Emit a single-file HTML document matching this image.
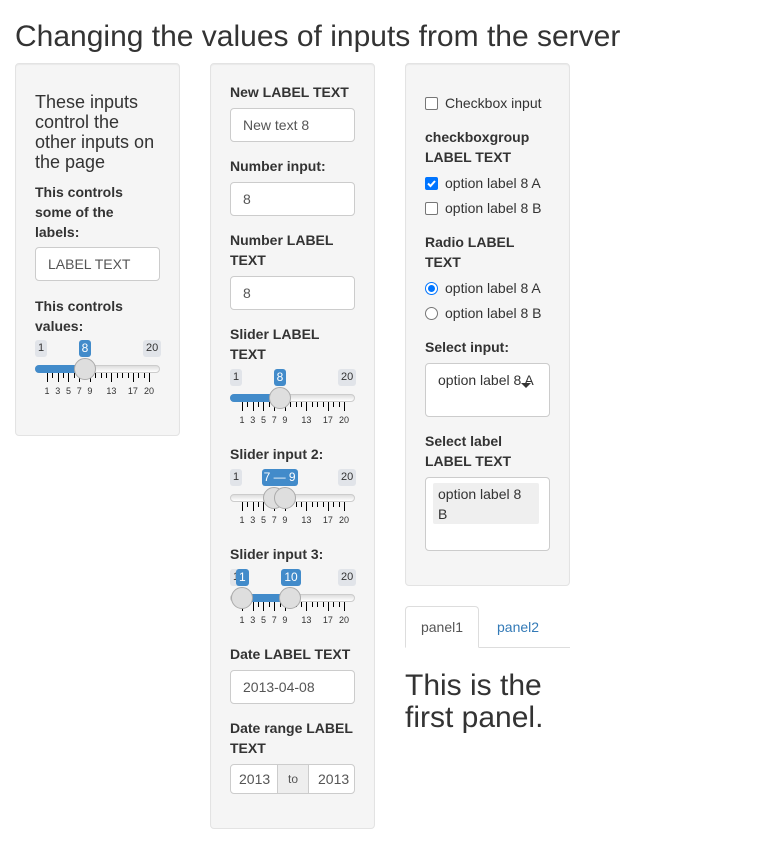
<!DOCTYPE html>
<html><head><meta charset="utf-8">
<style>
*{box-sizing:border-box}
body{margin:0;width:780px;height:849px;background:#fff;font-family:"Liberation Sans",sans-serif;color:#333;position:relative;overflow:hidden}
.a{position:absolute;white-space:nowrap}
.well{position:absolute;background:#f5f5f5;border:1px solid #e3e3e3;border-radius:4px;box-shadow:inset 0 1px 1px rgba(0,0,0,.05)}
.lb{position:absolute;font-weight:bold;font-size:14px;line-height:20px;white-space:nowrap}
.inp{position:absolute;background:#fff;border:1px solid #ccc;border-radius:4px;font-size:14px;color:#555;padding-left:12px;white-space:nowrap;overflow:hidden}
.tag{position:absolute;font-size:11px;line-height:17px;height:17px;padding:0 3px;border-radius:3px;background:#e1e4e9;color:#333;top:0}
.tag.b{background:#428bca;color:#fff;font-size:12px}
.track{position:absolute;height:8px;border:1px solid #ccc;border-radius:4px;background:linear-gradient(#ddd,#fff)}
.bar{position:absolute;height:8px;background:#428bca;border-radius:4px 0 0 4px}
.h{position:absolute;width:22px;height:22px;border-radius:50%;background:#dedede;border:1px solid #aaa}
.tk{position:absolute;width:1px;background:#000}
.gl{position:absolute;font-size:9px;line-height:10px;color:#333;transform:translateX(-50%)}
.cb{position:absolute;width:13px;height:13px;border:1px solid #767676;border-radius:2px;background:#fff}
.rd{position:absolute;width:13px;height:13px;border:1px solid #767676;border-radius:50%;background:#fff}
.t{position:absolute;font-size:14px;line-height:20px;white-space:nowrap}
</style></head><body>
<div class="a" style="left:15px;top:19px;font-size:30px;line-height:36px">Changing the values of inputs from the server</div>

<div class="well" style="left:15px;top:63px;width:165px;height:373px"></div>
<div class="well" style="left:210px;top:63px;width:165px;height:766px"></div>
<div class="well" style="left:405px;top:63px;width:165px;height:523px"></div>

<!-- panel 1 -->
<div class="a" style="left:35px;top:92px;font-size:18px;line-height:20px;white-space:normal;width:130px">These inputs control the other inputs on the page</div>
<div class="lb" style="left:35px;top:182px">This controls<br>some of the<br>labels:</div>
<div class="inp" style="left:35px;top:247px;width:125px;height:34px;line-height:32px">LABEL TEXT</div>
<div class="lb" style="left:35px;top:296px">This controls<br>values:</div>

<!-- panel 2 -->
<div class="lb" style="left:230px;top:82px">New LABEL TEXT</div>
<div class="inp" style="left:230px;top:108px;width:125px;height:34px;line-height:32px">New text 8</div>
<div class="lb" style="left:230px;top:156px">Number input:</div>
<div class="inp" style="left:230px;top:182px;width:125px;height:34px;line-height:32px">8</div>
<div class="lb" style="left:230px;top:230px">Number LABEL<br>TEXT</div>
<div class="inp" style="left:230px;top:276px;width:125px;height:34px;line-height:32px">8</div>
<div class="lb" style="left:230px;top:324px">Slider LABEL<br>TEXT</div>
<div class="lb" style="left:230px;top:444px">Slider input 2:</div>
<div class="lb" style="left:230px;top:544px">Slider input 3:</div>
<div class="lb" style="left:230px;top:644px">Date LABEL TEXT</div>
<div class="inp" style="left:230px;top:670px;width:125px;height:34px;line-height:32px">2013-04-08</div>
<div class="lb" style="left:230px;top:718px">Date range LABEL<br>TEXT</div>
<div class="inp" style="left:230px;top:764px;width:125px;height:30px;padding:0;font-size:14px;line-height:28px;color:#555">
<span style="position:absolute;left:8px;width:38px;overflow:hidden">2013</span>
<span style="position:absolute;left:46px;width:32px;top:0;bottom:0;background:#eee;border-left:1px solid #ccc;border-right:1px solid #ccc;text-align:center;font-size:12px">to</span>
<span style="position:absolute;left:87px;width:36px;overflow:hidden">2013</span></div>

<!-- panel 3 -->
<div class="cb" style="left:425px;top:97px"></div><div class="t" style="left:445px;top:93px">Checkbox input</div>
<div class="lb" style="left:425px;top:127px">checkboxgroup<br>LABEL TEXT</div>
<div class="cb" style="left:425px;top:177px;background:#0075ff;border-color:#0075ff"><svg width="11" height="11" viewBox="0 0 11 11" style="position:absolute;left:0;top:0"><path d="M2 5.5l2.5 2.5 4.5-5" stroke="#fff" stroke-width="2" fill="none"/></svg></div>
<div class="t" style="left:445px;top:173px">option label 8 A</div>
<div class="cb" style="left:425px;top:202px"></div><div class="t" style="left:445px;top:198px">option label 8 B</div>
<div class="lb" style="left:425px;top:232px">Radio LABEL<br>TEXT</div>
<div class="rd" style="left:425px;top:282px;border-color:#0075ff"><div style="position:absolute;left:2px;top:2px;width:7px;height:7px;border-radius:50%;background:#0075ff"></div></div>
<div class="t" style="left:445px;top:278px">option label 8 A</div>
<div class="rd" style="left:425px;top:307px"></div><div class="t" style="left:445px;top:303px">option label 8 B</div>
<div class="lb" style="left:425px;top:337px">Select input:</div>
<div class="inp" style="left:425px;top:363px;width:125px;height:54px;color:#333;padding-top:6px;line-height:20px">option label 8 A</div>
<div class="a" style="left:521px;top:383px;width:0;height:0;border-left:5px solid transparent;border-right:5px solid transparent;border-top:5px solid #333"></div>
<div class="lb" style="left:425px;top:431px">Select label<br>LABEL TEXT</div>
<div class="inp" style="left:425px;top:477px;width:125px;height:74px;padding:0"></div>
<div class="a" style="left:433px;top:483px;width:106px;height:41px;background:#efefef;border-radius:2px;font-size:14px;line-height:20px;padding:1px 5px;white-space:normal;color:#333">option label 8 B</div>

<!-- tabs -->
<div class="a" style="left:405px;top:647px;width:165px;height:1px;background:#ddd"></div>
<div class="a" style="left:405px;top:606px;width:74px;height:42px;border:1px solid #ddd;border-bottom-color:#fff;border-radius:4px 4px 0 0;background:#fff;font-size:14px;line-height:40px;text-align:center;color:#555">panel1</div>
<div class="a" style="left:497px;top:617px;font-size:14px;line-height:20px;color:#337ab7">panel2</div>
<div class="a" style="left:405px;top:670px;font-size:30px;line-height:32px">This is the<br>first panel.</div>

<script>
function slider(x,y,from,to,single){
  var W=125,gx=x+12,gw=102;
  function px(v){return gx+(v-1)/19*gw}
  var h='';
  h+='<div class="tag" style="left:'+x+'px;top:'+y+'px">1</div>';
  h+='<div class="tag" style="left:'+(x+W-17)+'px;top:'+y+'px">20</div>';
  h+='<div class="track" style="left:'+x+'px;top:'+(y+25)+'px;width:'+W+'px"></div>';
  if(single){
    h+='<div class="bar" style="left:'+x+'px;top:'+(y+25)+'px;width:'+(px(from)-x)+'px"></div>';
    h+='<div class="tag b" style="left:'+(px(from)-6)+'px;top:'+y+'px">'+from+'</div>';
  } else {
    h+='<div class="bar" style="left:'+px(from)+'px;top:'+(y+25)+'px;width:'+(px(to)-px(from))+'px;border-radius:0"></div>';
    if(to-from<4){
      h+='<div class="tag b" style="left:'+((px(from)+px(to))/2-18)+'px;top:'+y+'px;width:36px;padding:0;text-align:center">'+from+' — '+to+'</div>';
    } else {
      h+='<div class="tag b" style="left:'+(px(from)-6)+'px;top:'+y+'px">'+from+'</div>';
      h+='<div class="tag b" style="left:'+(px(to)-9)+'px;top:'+y+'px">'+to+'</div>';
    }
  }
  var labs=[1,3,5,7,9,13,17,20];
  for(var v=1;v<=20;v++){
    var major=labs.indexOf(v)>=0;
    h+='<div class="tk" style="left:'+Math.round(px(v))+'px;top:'+(y+33)+'px;height:'+(major?9:5)+'px"></div>';
    if(major)h+='<div class="gl" style="left:'+px(v)+'px;top:'+(y+46)+'px">'+v+'</div>';
  }
  h+='<div class="h" style="left:'+(px(from)-11)+'px;top:'+(y+18)+'px"></div>';
  if(!single)h+='<div class="h" style="left:'+(px(to)-11)+'px;top:'+(y+18)+'px"></div>';
  document.body.insertAdjacentHTML('beforeend',h);
}
slider(35,340,8,8,true);
slider(230,369,8,8,true);
slider(230,469,7,9,false);
slider(230,569,1,10,false);
</script>
</body></html>
